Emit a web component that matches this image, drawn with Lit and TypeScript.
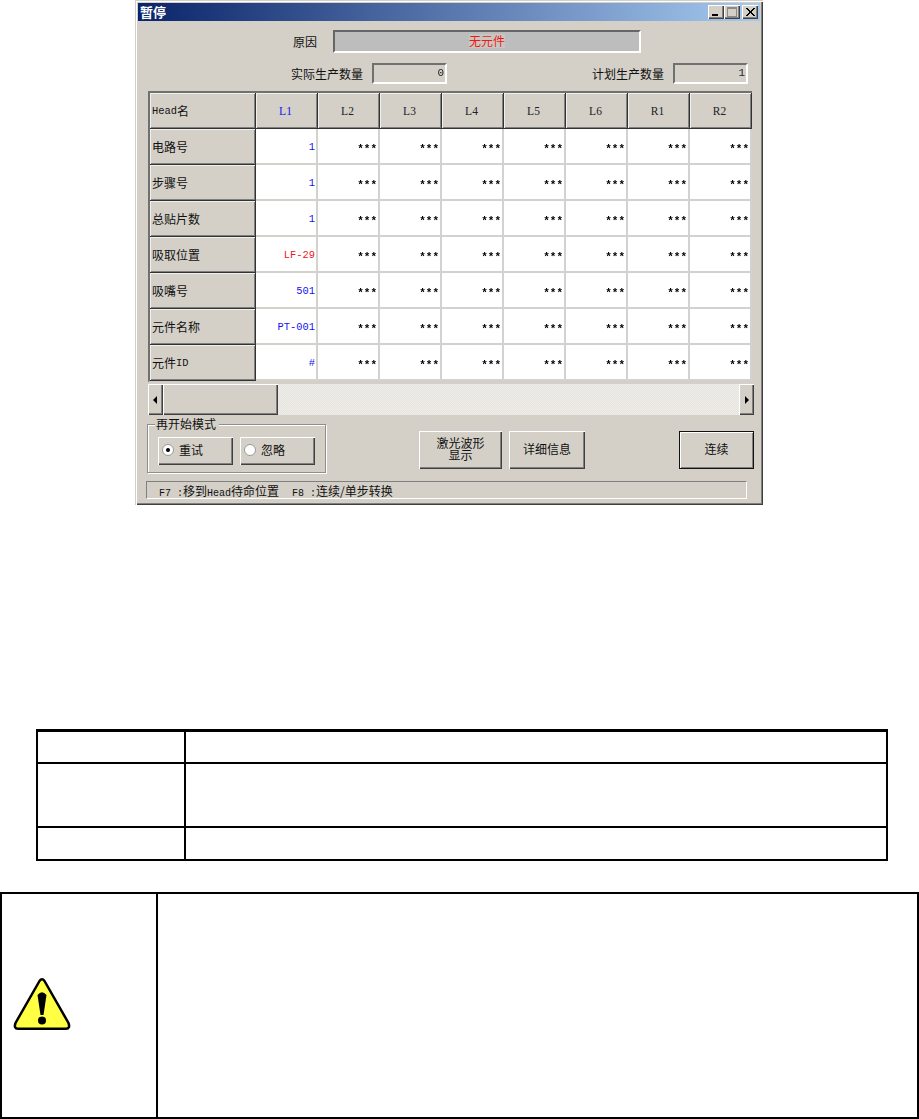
import { LitElement, html, css } from "lit";
import { customElement } from "lit/decorators.js";

const COLS = ["L1", "L2", "L3", "L4", "L5", "L6", "R1", "R2"];
const ROWS: [string, string, string][] = [
  ["电路号", "1", "blue"],
  ["步骤号", "1", "blue"],
  ["总贴片数", "1", "blue"],
  ["吸取位置", "LF-29", "red"],
  ["吸嘴号", "501", "blue"],
  ["元件名称", "PT-001", "blue"],
  ["元件ID", "#", "blue"],
];

@customElement("app-root")
export class AppRoot extends LitElement {
  static styles = css`
    :host {
      display: block;
      width: 919px;
      height: 1119px;
      background: #fff;
      overflow: hidden;
      font-family: "Noto Sans CJK SC", "Liberation Sans", sans-serif;
      font-size: 12px;
      color: #111;
    }
    .win {
      box-sizing: border-box;
      width: 628px;
      height: 505px;
      margin-left: 135px;
      padding: 3px;
      background: #d4d0c8;
      box-shadow: inset 1px 1px 0 #d4d0c8, inset 2px 2px 0 #fff, inset -1px -1px 0 #404040, inset -2px -2px 0 #808080;
      display: flex;
      flex-direction: column;
    }
    .title {
      height: 18px;
      flex: none;
      background: linear-gradient(90deg, #0a246a, #a6caf0);
      color: #fff;
      font-weight: 700;
      font-size: 13px;
      display: flex;
      align-items: center;
      padding: 0 2px;
      line-height: 18px;
    }
    .title .name { flex: 1; }
    .tb {
      box-sizing: border-box;
      width: 16px;
      height: 14px;
      background: #d4d0c8;
      box-shadow: inset 1px 1px 0 #fff, inset -1px -1px 0 #404040, inset -2px -2px 0 #808080;
      display: flex;
      align-items: center;
      justify-content: center;
    }
    .tb svg { display: block; }
    .tb.close { margin-left: 2px; }
    .tb-wrap { display: flex; }
    .r1 { display: flex; align-items: center; height: 23px; margin-top: 9px; padding-left: 155px; }
    .lab { width: 40px; }
    .reason {
      box-sizing: border-box;
      width: 308px;
      height: 23px;
      background: #bdbdbd;
      border: 2px solid;
      border-color: #666 #fff #fff #666;
      display: flex;
      justify-content: center;
      align-items: center;
      padding-bottom: 1px;
      color: #f01818;
      line-height: 14px;
    }
    .reason span { background: #c8c6c0; }
    .r2 { display: flex; align-items: center; height: 21px; margin-top: 10px; padding-left: 153px; }
    .num {
      box-sizing: border-box;
      width: 75px;
      height: 21px;
      border: 2px solid;
      border-color: #707070 #fff #fff #707070;
      text-align: right;
      padding-right: 1px;
      line-height: 17px;
      font-family: "Liberation Mono", monospace;
      font-size: 11px;
      color: #222;
      filter: grayscale(1);
    }
    .l2a { width: 81px; }
    .l2b { width: 81px; margin-left: 145px; }
    .grid {
      box-sizing: border-box;
      margin: 7px 0 0 10px;
      width: 604px;
      height: 291px;
      background: #fff;
      border: solid;
      border-width: 2px 0 1px 2px;
      border-color: #707070 #fff #d0cec8 #707070;
      display: grid;
      grid-template-columns: 106px repeat(8, 62px);
      grid-template-rows: repeat(8, 36px);
    }
    .hd {
      box-sizing: border-box;
      background: #d4d0c8;
      border-right: 1px solid #333;
      border-bottom: 1px solid #333;
      box-shadow: inset 1px 1px 0 #f2f0ec, inset -1px -1px 0 #808080;
      display: flex;
      align-items: center;
      padding-left: 2px;
      line-height: 14px;
    }
    .ch {
      justify-content: center;
      padding: 0 2px 0 0;
      font-family: "Liberation Serif", serif;
      font-size: 11.5px;
      color: #222;
    }
    .ch.on { color: #1212f0; }
    .latin { font-family: "Liberation Mono", monospace; font-size: 10.4px; }
    .cell {
      box-sizing: border-box;
      background: #fff;
      border-right: 2px solid #d4d2cc;
      border-bottom: 2px solid #d4d2cc;
      display: flex;
      align-items: center;
      justify-content: flex-end;
      padding: 2px 1px 0 0;
      font-family: "Liberation Mono", monospace;
      font-size: 10.4px;
      color: #1a1a1a;
    }
    .cell.blue { color: #1212f0; }
    .cell.red { color: #f01818; }
    .cell.star {
      padding-top: 5px;
      font-weight: 700;
      font-size: 11px;
      color: #000;
      filter: grayscale(1);
    }
    .sb {
      display: flex;
      width: 606px;
      height: 31px;
      margin: 2px 0 0 10px;
      background: repeating-conic-gradient(#e4e2dc 0 25%, #f0efeb 0 50%) 0 0 / 2px 2px;
    }
    .raised {
      box-sizing: border-box;
      background: #d4d0c8;
      box-shadow: inset 1px 1px 0 #fff, inset -1px -1px 0 #404040, inset -2px -2px 0 #808080;
    }
    .sb .arr { width: 15px; display: flex; align-items: center; justify-content: center; flex: none; }
    .sb .thumb { width: 115px; flex: none; }
    .sb .gap { flex: 1; }
    .lower { display: flex; align-items: flex-start; height: 49px; margin: 9px 0 0 9px; }
    .group {
      box-sizing: border-box;
      position: relative;
      width: 179px;
      height: 49px;
      border: 1px solid #908e88;
      box-shadow: 1px 1px 0 #fff, inset 1px 1px 0 #fff;
      display: flex;
      gap: 7px;
      padding: 12px 0 0 10px;
    }
    .legend {
      position: absolute;
      top: -8px;
      left: 7px;
      background: #d4d0c8;
      padding: 0 3px 0 1px;
      line-height: 14px;
    }
    .rb {
      width: 75px;
      height: 28px;
      display: flex;
      align-items: center;
      padding: 0 0 3px 4px;
      gap: 5px;
    }
    .dot { width: 12px; height: 12px; flex: none; display: block; }
    .btn {
      width: 83px;
      height: 38px;
      margin-top: 7px;
      display: flex;
      align-items: center;
      justify-content: center;
      text-align: center;
      line-height: 12px;
      padding-bottom: 3px;
    }
    .b1 { margin-left: 93px; }
    .b2 { width: 76px; margin-left: 7px; }
    .b3 {
      width: 75px;
      margin-left: 94px;
      box-shadow: inset 0 0 0 1px #111, inset 2px 2px 0 #fff, inset -2px -2px 0 #808080;
    }
    .status {
      box-sizing: border-box;
      width: 601px;
      height: 18px;
      margin: 8px 0 0 8px;
      border: 1px solid;
      border-color: #808080 #fff #fff #808080;
      padding-left: 12px;
      line-height: 17px;
      white-space: pre;
    }
    .latin2 { font-family: "Liberation Mono", monospace; font-size: 10px; }
    .f8 { margin-left: 13px; }
    .t1 {
      box-sizing: border-box;
      width: 852px;
      height: 132px;
      margin: 224px 0 0 36px;
      border: solid #000;
      border-width: 3px 2px 2px 2px;
      display: grid;
      grid-template-columns: 148px 1fr;
      grid-template-rows: 32px 64px 1fr;
    }
    .t1 div { border-bottom: 2px solid #000; }
    .t1 div:nth-child(odd) { border-right: 2px solid #000; }
    .t1 div:nth-last-child(-n + 2) { border-bottom: 0; }
    .t2 {
      box-sizing: border-box;
      width: 919px;
      height: 227px;
      margin-top: 31px;
      border: 2px solid #000;
      display: grid;
      grid-template-columns: 156px 1fr;
    }
    .warn { border-right: 2px solid #000; padding: 83px 0 0 11px; }
    .warn svg { display: block; }
  `;

  render() {
    return html`
      <div class="win">
        <div class="title">
          <span class="name">暂停</span>
          <div class="tb-wrap">
            <div class="tb"><svg width="16" height="14"><rect x="4" y="9" width="6" height="2" fill="#000" /></svg></div>
            <div class="tb"><svg width="16" height="14"><rect x="3.5" y="2.5" width="9" height="9" fill="none" stroke="#8a8a8a" /><rect x="3" y="2" width="10" height="2" fill="#8a8a8a" /></svg></div>
            <div class="tb close"><svg width="16" height="14"><path d="M4 3l8 8M5 3l8 8M12 3l-8 8M13 3l-8 8" stroke="#000" fill="none" /></svg></div>
          </div>
        </div>
        <div class="r1"><span class="lab">原因</span><div class="reason"><span>无元件</span></div></div>
        <div class="r2">
          <span class="l2a">实际生产数量</span><div class="num">0</div>
          <span class="l2b">计划生产数量</span><div class="num">1</div>
        </div>
        <div class="grid">
          <div class="hd"><span class="latin">Head</span>名</div>
          ${COLS.map((c, i) => html`<div class="hd ch ${i === 0 ? "on" : ""}">${c}</div>`)}
          ${ROWS.map(
            ([name, val, color]) => html`
              <div class="hd">${name.endsWith("ID") ? html`元件<span class="latin">ID</span>` : name}</div>
              <div class="cell ${color}">${val}</div>
              ${COLS.slice(1).map(() => html`<div class="cell star">***</div>`)}
            `
          )}
        </div>
        <div class="sb">
          <div class="raised arr"><svg width="6" height="8"><path d="M4 0v8L0 4z" fill="#000" /></svg></div>
          <div class="raised thumb"></div>
          <div class="gap"></div>
          <div class="raised arr"><svg width="6" height="8"><path d="M1 0v8l4-4z" fill="#000" /></svg></div>
        </div>
        <div class="lower">
          <div class="group">
            <span class="legend">再开始模式</span>
            <div class="raised rb">
              <svg class="dot" viewBox="0 0 12 12"><circle cx="6" cy="6" r="5.5" fill="#fff" stroke="#999" /><circle cx="6" cy="6" r="2" fill="#000" /></svg>
              <span>重试</span>
            </div>
            <div class="raised rb">
              <svg class="dot" viewBox="0 0 12 12"><circle cx="6" cy="6" r="5.5" fill="#fff" stroke="#999" /></svg>
              <span>忽略</span>
            </div>
          </div>
          <div class="raised btn b1"><span>激光波形<br />显示</span></div>
          <div class="raised btn b2">详细信息</div>
          <div class="raised btn b3">连续</div>
        </div>
        <div class="status"><span class="latin2">F7 :</span>移到<span class="latin2">Head</span>待命位置<span class="latin2 f8">F8 :</span>连续/单步转换</div>
      </div>
      <div class="t1"><div></div><div></div><div></div><div></div><div></div><div></div></div>
      <div class="t2">
        <div class="warn">
          <svg width="58" height="54" viewBox="0 0 58 54">
            <path d="M26.500 4 Q29 0.500 31.500 4 L55.500 46 Q57.500 51.800 53 51.800 H5 Q0.500 51.800 2.500 46 Z" fill="#ffff44" stroke="#000" stroke-width="2.500" stroke-linejoin="round" />
            <path d="M24.500 18 Q29 12.500 33.500 18 L30.500 38 H27.500 Z" fill="#000" />
            <circle cx="29" cy="43.500" r="4" fill="#000" />
          </svg>
        </div>
        <div></div>
      </div>
    `;
  }
}
